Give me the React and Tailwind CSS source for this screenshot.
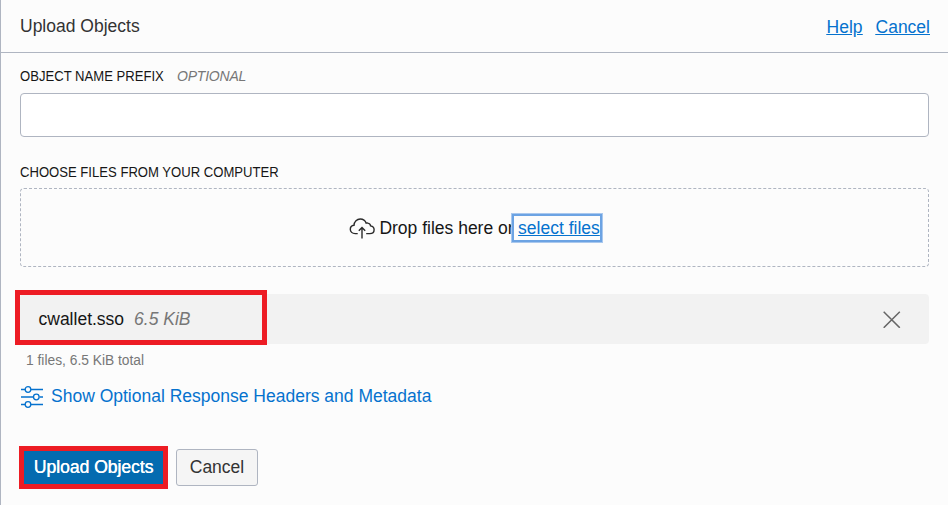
const FONT = "font-['Liberation_Sans',Arial,sans-serif]";

function CloudUpload() {
  return (
    <svg className="h-6 w-[26px] shrink-0" viewBox="0 0 26 24" fill="none" stroke="#2a2a2a" strokeWidth="1.4">
      <path d="M8.7 17.6H6.2C3.2 17.6 1.3 15.6 1.3 13.2C1.3 11 2.8 9.6 5 9.3C5.2 5.5 8 3 11.2 3C14.2 3 16.4 4.8 17.2 7.2C17.8 7 18.4 7 18.9 7.1C20.6 7.4 21.5 8.6 21.6 9.9C23.6 10.3 25.1 11.8 25.1 13.7C25.1 16 23.2 17.6 20.8 17.6H17.2" />
      <path d="M13 22.5V11.5M9.8 14.7L13 11.5L16.2 14.7" />
    </svg>
  );
}

function Sliders() {
  return (
    <svg className="h-6 w-[22px] shrink-0" viewBox="0 0 22 24" fill="none" stroke="#0572ce" strokeWidth="1.3">
      <path d="M0 4.5H4M10 4.5H22M0 12H12M18.5 12H22M0 19.5H4M10 19.5H22" />
      <circle cx="7" cy="4.5" r="2.8" />
      <circle cx="15.3" cy="12" r="2.8" />
      <circle cx="7" cy="19.5" r="2.8" />
    </svg>
  );
}

export default function App() {
  return (
    <div className={`relative h-[505px] w-[948px] overflow-hidden border-l border-[#afb5c1] bg-[#fcfcfc] text-[17.5px] text-[#161616] ${FONT}`}>
      <header className="flex h-[53px] items-center justify-between border-b border-[#afb5c1] pl-[19px] pr-[19px]">
        <h1 className="leading-5 text-[#333]">Upload Objects</h1>
        <nav className="-mr-px flex gap-[13px] pt-0.5 leading-5 text-[#0572ce] underline">
          <a href="#help">Help</a>
          <a href="#cancel">Cancel</a>
        </nav>
      </header>

      <main className="pl-[19px] pr-[19px]">
        <label className="flex h-10 items-start pt-[13px] leading-5">
          <span className="w-[157px] origin-left scale-x-[0.935] whitespace-nowrap text-[14px]">OBJECT NAME PREFIX</span>
          <i className="text-[14px] tracking-[-0.2px] text-[#777]">OPTIONAL</i>
        </label>
        <input className="block h-11 w-full rounded border border-[#afb5c1] bg-white px-3 outline-none" />

        <div className="mt-[25px] h-[26px] origin-left scale-x-[0.935] text-[14px] leading-5">CHOOSE FILES FROM YOUR COMPUTER</div>
        <div className="flex h-[79px] items-center justify-center rounded border border-dashed border-[#afb5c1] pl-[3px]">
          <CloudUpload />
          <span className="ml-1 whitespace-nowrap leading-6">Drop files here or</span>
          <a
            href="#select"
            className="ml-[-3px] h-[30px] w-[92px] border border-[#a9c8ee] text-[#0572ce]"
          >
            <span className="block h-7 whitespace-nowrap border-2 border-[#6ca3e3] bg-[#fcfcfc] pl-[4.5px] leading-[25px] underline">select files</span>
          </a>
        </div>

        <div className="relative mt-[27px] flex h-[50px] items-center rounded bg-[#f2f2f2] pl-[18.5px] pr-7">
          <span>cwallet.sso</span>
          <i className="ml-[10px] text-[#777]">6.5 KiB</i>
          <svg className="ml-auto h-[18px] w-[18px]" viewBox="0 0 18 18" stroke="#666" strokeWidth="1.5">
            <path d="M0.7 1.7L16.8 17.8M16.8 1.7L0.7 17.8" />
          </svg>
          <div className="absolute -left-[5px] -top-1 h-[55px] w-[252px] border-[5px] border-[#ed1c24]" />
        </div>
        <p className="mt-[7px] pl-[6px] text-[13.8px] leading-5 text-[#777]">1 files, 6.5 KiB total</p>

        <a href="#metadata" className="mt-[14px] flex h-6 items-center gap-[8px] pl-px leading-6 text-[#0572ce]">
          <Sliders />
          <span className="-mt-0.5 whitespace-nowrap">Show Optional Response Headers and Metadata</span>
        </a>

        <div className="mt-[37px] flex items-start">
          <button className="-ml-px h-[43px] w-[149px] whitespace-nowrap border-[5px] border-[#ed1c24] bg-[#046bb0] text-white [text-shadow:0.4px_0_0_#fff]">
            Upload Objects
          </button>
          <button className="ml-2 mt-[3px] h-[37px] w-[82px] rounded-[3px] border border-[#afb5c1] bg-[#f5f5f5] text-[#333]">Cancel</button>
        </div>
      </main>
    </div>
  );
}
